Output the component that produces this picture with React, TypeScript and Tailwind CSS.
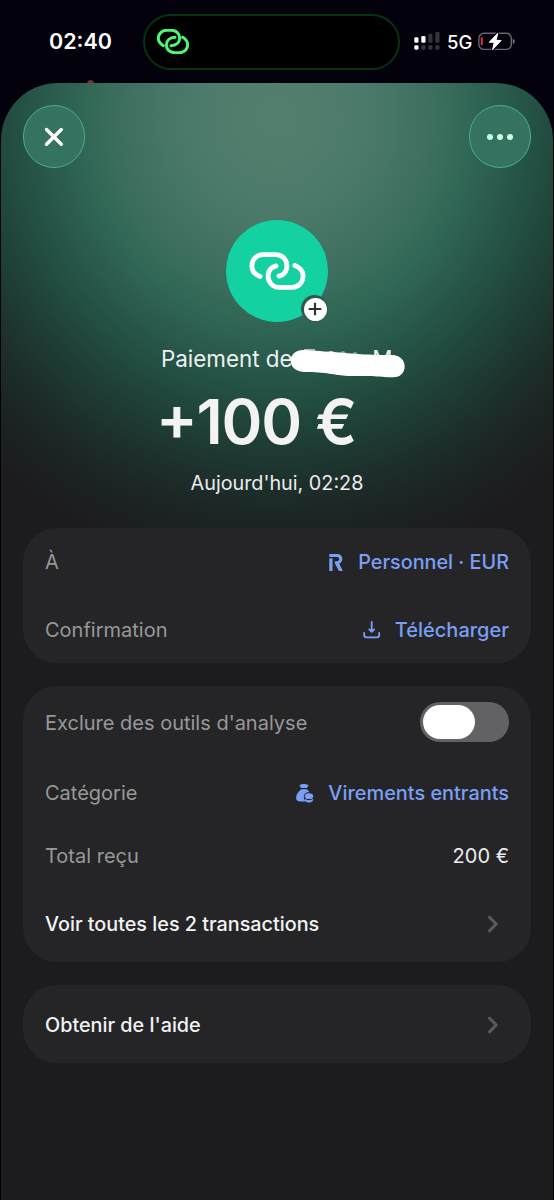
import React, { useState } from 'react';

function LinkIcon() {
  return (
    <svg viewBox="147 140 169 115" className="w-[57px] h-[38px]" fill="none" stroke="#fff" strokeWidth="14.5" strokeLinecap="round">
      <path d="M179 214C163 208 154 197 154 182C154 162 169 148 188 148H226C246 148 260 163 260 182C260 198 250 209 236 213" />
      <path d="M284 181C300 187 309 198 309 213C309 233 294 247 275 247H237C217 247 203 232 203 213C203 197 213 186 227 182" />
    </svg>
  );
}

function HotspotIcon() {
  return (
    <svg viewBox="471 87 96 75" className="w-8 h-[25px]" fill="none" stroke="#4cf777" strokeWidth="9" strokeLinecap="round">
      <path d="M490 137C480 131 475 124 475 115C475 101 486 91 500 91H514C529 91 539 101 539 114C539 127 529 136 513 137" />
      <path d="M548 112C558 118 563 125 563 134C563 148 552 158 538 158H524C509 158 499 148 499 135C499 122 509 113 525 112" />
    </svg>
  );
}

function SignalIcon() {
  return (
    <svg viewBox="0 0 26 18" className="w-[26px] h-[18px]">
      <g fill="#fff">
        <rect x="0.3" y="5.3" width="4.2" height="5.5" rx="1.3" />
        <rect x="7.3" y="4" width="4.2" height="6.8" rx="1.3" />
        <rect x="0.3" y="13.2" width="4.2" height="4.5" rx="1.4" />
      </g>
      <g fill="#36333c">
        <rect x="14.3" y="1.7" width="4.2" height="9.1" rx="1.3" />
        <rect x="21.3" y="0" width="4.2" height="10.8" rx="1.3" />
        <rect x="7.3" y="13.2" width="4.2" height="4.5" rx="1.4" />
        <rect x="14.3" y="13.2" width="4.2" height="4.5" rx="1.4" />
        <rect x="21.3" y="13.2" width="4.2" height="4.5" rx="1.4" />
      </g>
    </svg>
  );
}

function BatteryIcon() {
  return (
    <svg viewBox="0 0 37 19" className="w-[37px] h-[19px]">
      <rect x="0.9" y="1.2" width="32.4" height="16.2" rx="5" fill="none" stroke="#69666f" strokeWidth="1.4" />
      <path d="M34.8 6.7c1.3.5 1.8 1.5 1.8 2.6s-.5 2.1-1.8 2.6z" fill="#7c7983" />
      <rect x="2.8" y="5.3" width="1.9" height="8" rx=".8" fill="#e8323c" />
      <path d="M20.4.2 10.8 10.4h5.2L14.2 18.6 23.6 8.2H18.2z" fill="#fff" stroke="#03010b" strokeWidth="2.4" strokeLinejoin="round" paintOrder="stroke" />
      <path d="M19.8 1.2 11.3 10.200h5L14.600 17.600 23 8.400H17.900z" fill="#fff" stroke="#fff" strokeWidth=".8" strokeLinejoin="round" />
    </svg>
  );
}

function AccountIcon() {
  return (
    <svg viewBox="0 0 14 17" className="w-[14px] h-[17px]" fill="#7a9ff5">
      <path d="M.3 4.3h3.2V17H.3z" />
      <path d="M.3 0h7.8c3.2 0 5.2 2.1 5.2 4.9 0 2.2-1.2 3.9-3.1 4.6L13.8 17h-3.8L5.9 9.5V7.3h2c1.5 0 2.3-.9 2.3-2.2S9.400 2.900 7.900 2.900H.3z" />
    </svg>
  );
}

function DownloadIcon() {
  return (
    <svg viewBox="0 0 18 18" className="w-[18px] h-[18px]" fill="none" stroke="#7a9ff5" strokeWidth="1.8" strokeLinecap="round" strokeLinejoin="round">
      <path d="M8.700 1v9.600M6.200 8.400l2.500 2.400 2.500-2.400" />
      <path d="M1.200 11.800v2.300c0 1.500.8 2.300 2.300 2.300h10.400c1.500 0 2.300-.8 2.300-2.300v-2.300" />
    </svg>
  );
}

function MoneyBagIcon() {
  return (
    <svg viewBox="0 0 18 20" className="w-[18px] h-[20px]" fill="#7a9ff5">
      <path d="M4.1 1.7C5.6 1.8 6.300.8 8 .8s2.400 1 3.900.9c.5 0 .7.4.5.8L11 5H5L3.600 2.500c-.2-.4 0-.8.5-.8z" />
      <path d="M5.200 6.300h5.600c.8.8 1.800 1.800 2.700 3-3.400-.2-5.700 1.800-5.700 4.500 0 2 .8 3.500 2.200 4.700H4.600C1.600 18.500.1 17.200.1 14.700.1 11.400 2.600 8.700 5.200 6.300z" />
      <ellipse cx="13" cy="13.200" rx="4.200" ry="2.900" />
      <path d="M8.800 15.700c1.900 1.900 6.500 1.900 8.400 0 .4 2.200-1.600 3.700-4.200 3.700s-4.600-1.500-4.200-3.700z" />
    </svg>
  );
}

function Chevron() {
  return (
    <svg viewBox="0 0 10 18" className="w-[10px] h-[18px] mr-[11px]" fill="none" stroke="#5b5b5e" strokeWidth="3" strokeLinecap="round" strokeLinejoin="round">
      <path d="M1.600 2.200 8.200 9 1.600 15.800" />
    </svg>
  );
}

function StatusBar() {
  return (
    <div className="h-[83px] shrink-0 flex items-start pt-[14px] bg-[#03010b] relative">
      <div className="w-[143px] h-14 pl-[49px] pb-0.5 flex items-center text-[21.5px] font-semibold">02:40</div>
      <div className="w-[257px] h-14 rounded-full border-2 border-[#063310] bg-black flex items-center pl-3 pb-0.5">
        <HotspotIcon />
      </div>
      <div className="h-14 pl-[14px] pb-0.5 flex items-center">
        <SignalIcon />
        <span className="ml-[7px] w-[25px] pt-0.5 text-[18.5px] font-medium leading-none">5G</span>
        <div className="ml-[6px]">
          <BatteryIcon />
        </div>
      </div>
      <div className="absolute left-[87px] top-[80px] w-[7px] h-[7px] rounded-full bg-[#7e2b31]" />
    </div>
  );
}

function Card({ children }: { children: React.ReactNode }) {
  return <div className="mx-[23px] px-[22px] rounded-[34px] bg-[#252527]">{children}</div>;
}

export default function App() {
  const [excluded, setExcluded] = useState(false);

  return (
    <div className="w-[554px] h-[1200px] overflow-hidden flex flex-col bg-[#03010b] text-white font-['Inter',sans-serif]">
      <StatusBar />

      <div className="relative mx-px h-[1117px] shrink-0 rounded-t-[57px] bg-[#1c1c1e] bg-[radial-gradient(430px_455px_at_276px_35px,#547f6e_0%,#4c7a6a_20%,#3f7160_34%,#316756_45%,#265548_57%,#1f4238_69%,#1d302b_80%,#1c2323_90%,#1c1c1e_100%)]">
        <div className="flex justify-between pt-[22px] px-[22px]">
          <button className="w-[62px] h-[63px] rounded-full border border-[#45b08c] bg-[#357260] flex items-center justify-center">
            <svg viewBox="0 0 20 20" className="w-5 h-5" fill="none" stroke="#fff" strokeWidth="3.4" strokeLinecap="round">
              <path d="M2.500 2.500 17.300 17.300M17.300 2.500 2.500 17.300" />
            </svg>
          </button>
          <button className="w-[62px] h-[63px] rounded-full border border-[#45b08c] bg-[#357260] flex items-center justify-center gap-1">
            <span className="w-1.5 h-1.5 rounded-full bg-[#c9fbe8]" />
            <span className="w-1.5 h-1.5 rounded-full bg-[#c9fbe8]" />
            <span className="w-1.5 h-1.5 rounded-full bg-[#c9fbe8]" />
          </button>
        </div>

        <div className="flex flex-col items-center pt-[52px]">
          <div className="relative w-[102px] h-[102px] rounded-full bg-[#14d1a2] flex items-center justify-center">
            <LinkIcon />
            <div className="absolute left-[75px] top-[75px] w-[27px] h-[27px] rounded-full bg-[#30594c] flex items-center justify-center pl-px pt-px">
              <div className="w-[23px] h-[23px] rounded-full bg-white flex items-center justify-center">
                <svg viewBox="0 0 14 14" className="w-[14px] h-[14px]" stroke="#2d3330" strokeWidth="2.2">
                  <path d="M7 .7v12.600M.7 7h12.600" />
                </svg>
              </div>
            </div>
          </div>

          <div className="w-[232px] mt-[23px]">
            <div className="relative flex justify-between text-[22.4px] leading-7 whitespace-nowrap text-[#edf1f0]">
              <span>Paiement de</span>
              <span className="-mr-1.5">M.</span>
              {/* marker stroke over the sender name */}
              <svg viewBox="0 0 116 30" className="absolute left-[129px] top-[4px] w-[116px] h-[30px]" fill="#fff">
                <path d="M12 1C18 .5 27 2 44 3C58 4.500 73 6 103 6C118 7 118 26 106 28C95 29 90 27 78 27H58C44 26 37 23 14 23C-4 22-3 2 12 1Z" />
                <path d="M14 .3h11v1.200H14zM38 3q3-2 6 0zM50 3.500q3-2 6 0zM62 4.500q3-2 6 0z" fill="#dfe6e3" />
              </svg>
            </div>
            <div className="-ml-[5px] text-[62px] leading-[76px] mt-[11px] font-semibold tracking-[-1.2px] whitespace-nowrap text-[#f3f3f4]">
              <span className="relative -top-1">+</span>100 €
            </div>
          </div>
          <div className="text-[19.8px] leading-7 mt-[9px] text-[#ececed]">Aujourd'hui, 02:28</div>
        </div>

        <div className="mt-[31px] -mx-px flex flex-col gap-[23px] text-[20px] text-[#98989b]">
          <Card>
            <div className="h-[68px] flex items-center justify-between">
              <span>À</span>
              <span className="flex items-center gap-[15px] text-[19.8px] text-[#7a9ff5] font-medium">
                <AccountIcon />
                <span className="pt-0.5">Personnel · EUR</span>
              </span>
            </div>
            <div className="h-[67px] flex items-center justify-between">
              <span>Confirmation</span>
              <span className="flex items-center gap-[14px] text-[20px] text-[#7a9ff5] font-medium">
                <DownloadIcon />
                Télécharger
              </span>
            </div>
          </Card>

          <Card>
            <div className="h-[72px] flex items-center justify-between">
              <span className="pt-0.5">Exclure des outils d'analyse</span>
              <button
                role="switch"
                aria-checked={excluded}
                onClick={() => setExcluded(!excluded)}
                className={`w-[89px] h-10 rounded-full p-[3px] flex items-center ${excluded ? 'justify-end bg-[#17d2a4]' : 'bg-[#626265]'}`}
              >
                <span className="w-[52px] h-[34px] rounded-full bg-white" />
              </button>
            </div>
            <div className="h-[70px] flex items-center justify-between">
              <span>Catégorie</span>
              <span className="flex items-center gap-[14px] text-[19.9px] text-[#7a9ff5] font-medium">
                <MoneyBagIcon />
                <span className="pt-0.5">Virements entrants</span>
              </span>
            </div>
            <div className="h-14 flex items-center justify-between">
              <span>Total reçu</span>
              <span className="text-[#ececed]">200 €</span>
            </div>
            <div className="h-[78px] pt-px flex items-center justify-between text-[19.8px] text-[#f2f2f3] font-medium">
              <span className="pt-0.5">Voir toutes les 2 transactions</span>
              <Chevron />
            </div>
          </Card>

          <Card>
            <div className="h-[78px] pt-0.5 flex items-center justify-between text-[19.8px] text-[#f2f2f3] font-medium">
              <span className="pt-0.5">Obtenir de l'aide</span>
              <Chevron />
            </div>
          </Card>
        </div>
      </div>
    </div>
  );
}
